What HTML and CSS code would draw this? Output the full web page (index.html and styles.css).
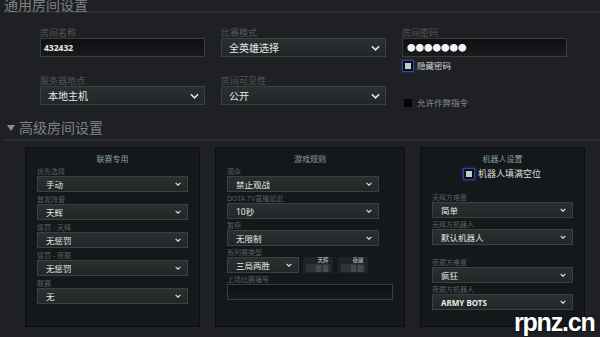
FILE: index.html
```html
<!DOCTYPE html>
<html lang="zh-CN">
<head>
<meta charset="utf-8">
<title>房间设置</title>
<link rel="stylesheet" href="styles.css">
</head>
<body>
<div class="sec-head top"><h2>通用房间设置</h2></div>

<div class="general">
  <div class="fg">
    <div class="lbl">房间名称</div>
    <div class="tinput">432432</div>
  </div>
  <div class="fg">
    <div class="lbl">比赛模式</div>
    <div class="dd big"><span>全英雄选择</span><svg class="chev" viewBox="0 0 10 6"><path d="M1 1L5 5L9 1"/></svg></div>
  </div>
  <div class="fg">
    <div class="lbl">房间密码</div>
    <div class="tinput pw">●●●●●●●</div>
    <div class="check on"><span class="cb"></span><span>隐藏密码</span></div>
  </div>
  <div class="fg">
    <div class="lbl">服务器地点</div>
    <div class="dd big"><span>本地主机</span><svg class="chev" viewBox="0 0 10 6"><path d="M1 1L5 5L9 1"/></svg></div>
  </div>
  <div class="fg">
    <div class="lbl">房间可见性</div>
    <div class="dd big"><span>公开</span><svg class="chev" viewBox="0 0 10 6"><path d="M1 1L5 5L9 1"/></svg></div>
  </div>
  <div class="fg cheat">
    <div class="check"><span class="cb"></span><span>允许作弊指令</span></div>
  </div>
</div>

<div class="sec-head adv"><span class="tri"></span><h2>高级房间设置</h2></div>

<div class="panels">
  <div class="panel p1">
    <div class="ptitle">联赛专用</div>
    <div class="groups g1">
      <div class="pg"><div class="lbl2">优先选择</div><div class="dd sm"><span>手动</span><svg class="chev s" viewBox="0 0 10 6"><path d="M1 1L5 5L9 1"/></svg></div></div>
      <div class="pg"><div class="lbl2">首发阵营</div><div class="dd sm"><span>天辉</span><svg class="chev s" viewBox="0 0 10 6"><path d="M1 1L5 5L9 1"/></svg></div></div>
      <div class="pg"><div class="lbl2">惩罚 - 天辉</div><div class="dd sm"><span>无惩罚</span><svg class="chev s" viewBox="0 0 10 6"><path d="M1 1L5 5L9 1"/></svg></div></div>
      <div class="pg"><div class="lbl2">惩罚 - 夜魇</div><div class="dd sm"><span>无惩罚</span><svg class="chev s" viewBox="0 0 10 6"><path d="M1 1L5 5L9 1"/></svg></div></div>
      <div class="pg"><div class="lbl2">联赛</div><div class="dd sm"><span>无</span><svg class="chev s" viewBox="0 0 10 6"><path d="M1 1L5 5L9 1"/></svg></div></div>
    </div>
  </div>

  <div class="panel p2">
    <div class="ptitle">游戏规则</div>
    <div class="groups g2">
      <div class="pg"><div class="lbl2">观众</div><div class="dd sm w152"><span>禁止观战</span><svg class="chev s" viewBox="0 0 10 6"><path d="M1 1L5 5L9 1"/></svg></div></div>
      <div class="pg"><div class="lbl2">DOTA TV直播延迟</div><div class="dd sm w152"><span>10秒</span><svg class="chev s" viewBox="0 0 10 6"><path d="M1 1L5 5L9 1"/></svg></div></div>
      <div class="pg"><div class="lbl2">暂停</div><div class="dd sm w152"><span>无限制</span><svg class="chev s" viewBox="0 0 10 6"><path d="M1 1L5 5L9 1"/></svg></div></div>
      <div class="pg">
        <div class="lbl2">系列赛类型</div>
        <div class="series">
          <div class="dd sm w72"><span>三局两胜</span><svg class="chev s" viewBox="0 0 10 6"><path d="M1 1L5 5L9 1"/></svg></div>
          <div class="scores">
            <div class="score"><div class="sl">天辉</div><div class="bar"><span class="sq"></span><span class="sq"></span></div></div>
            <div class="score"><div class="sl">夜魇</div><div class="bar"><span class="sq"></span><span class="sq"></span></div></div>
          </div>
        </div>
      </div>
      <div class="pg"><div class="lbl2">上场比赛编号</div><div class="tinput sm"></div></div>
    </div>
  </div>

  <div class="panel p3">
    <div class="ptitle">机器人设置</div>
    <div class="check on center"><span class="cb"></span><span>机器人填满空位</span></div>
    <div class="groups g3">
      <div class="pg"><div class="lbl2">天辉方难度</div><div class="dd sm"><span>简单</span><svg class="chev s" viewBox="0 0 10 6"><path d="M1 1L5 5L9 1"/></svg></div></div>
      <div class="pg"><div class="lbl2">天辉方机器人</div><div class="dd sm"><span>默认机器人</span><svg class="chev s" viewBox="0 0 10 6"><path d="M1 1L5 5L9 1"/></svg></div></div>
      <div class="pg spaced"><div class="lbl2">夜魇方难度</div><div class="dd sm"><span>疯狂</span><svg class="chev s" viewBox="0 0 10 6"><path d="M1 1L5 5L9 1"/></svg></div></div>
      <div class="pg"><div class="lbl2">夜魇方机器人</div><div class="dd sm"><span class="bold">ARMY BOTS</span><svg class="chev s" viewBox="0 0 10 6"><path d="M1 1L5 5L9 1"/></svg></div></div>
    </div>
  </div>
</div>

<div class="wm">rpnz.cn</div>
</body>
</html>
```

FILE: styles.css
```css
* { box-sizing: border-box; }

html, body {
  margin: 0;
  width: 600px;
  height: 337px;
  overflow: hidden;
  background: #1e2023;
}

body {
  position: relative;
  font-family: "Noto Sans", "Noto Sans CJK SC", sans-serif;
  color: #e4e6e6;
}

.sec-head {
  margin-left: 4px;
  border-bottom: 2px solid #2c2f32;
}

.sec-head h2 {
  margin: 0;
  font-weight: normal;
  font-size: 14px;
  line-height: 16px;
  color: #7e8285;
  white-space: nowrap;
}

.top { height: 16px; }
.top h2 { margin-top: -3px; }

.general {
  display: grid;
  grid-template-columns: 165px 165px 165px;
  column-gap: 16px;
  row-gap: 4px;
  align-items: start;
  padding-left: 40px;
  margin-top: 14px;
}

.lbl {
  height: 11px;
  font-size: 9px;
  line-height: 11px;
  color: #53585b;
  white-space: nowrap;
}

.tinput {
  height: 19px;
  border: 1px solid #383c3e;
  background: linear-gradient(#0d0f10, #191b1c);
  color: #ececec;
  font-size: 8.5px;
  font-weight: bold;
  line-height: 17px;
  padding-left: 3px;
}

.tinput.pw {
  font-family: "Noto Sans CJK SC", sans-serif;
  font-weight: normal;
  font-size: 8.5px;
  padding-left: 4px;
  color: #f4f4f4;
}

.tinput.sm { height: 16px; }

.dd {
  display: flex;
  align-items: center;
  justify-content: space-between;
  border: 1px solid #394141;
  background: linear-gradient(#29302f, #212727);
  color: #e6e8e8;
  white-space: nowrap;
}

.dd.big {
  height: 19px;
  padding: 0 5px 0 7px;
  font-size: 10px;
}

.dd.sm {
  height: 16px;
  padding: 0 6px 0 8px;
  font-size: 8.5px;
}

.dd .bold { font-weight: bold; font-size: 8px; }

.chev {
  width: 9px;
  height: 6px;
  flex: none;
}

.chev path {
  fill: none;
  stroke: #e4e6e6;
  stroke-width: 1.7;
}

.chev.s { width: 6px; height: 4px; }
.chev.s path { stroke-width: 2; stroke: #d8dbdb; }

.check {
  display: flex;
  align-items: center;
  gap: 4px;
  height: 10px;
  margin-top: 4px;
  margin-left: 1px;
  font-size: 8.5px;
  line-height: 10px;
  color: #8a8d90;
  white-space: nowrap;
}

.check .cb {
  width: 10px;
  height: 10px;
  flex: none;
  background: #050505;
  border: 1px solid #1c1d1e;
}

.check.on { color: #d4d6d8; }

.check.on .cb {
  border: 2px solid #0c0c14;
  background: #b3d3d1;
  box-shadow: 0 0 0 1px #3d3f96, 0 0 3px 1px #3a3c8c;
}

.cheat { margin-top: 19px; }

.adv {
  display: flex;
  align-items: center;
  gap: 4px;
  margin-top: 12px;
  padding-bottom: 3px;
}

.tri {
  width: 0;
  height: 0;
  margin-left: 3px;
  border-left: 4px solid transparent;
  border-right: 4px solid transparent;
  border-top: 6px solid #8a8e91;
}

.panels {
  display: flex;
  gap: 15px;
  padding-left: 25px;
  margin-top: 6px;
}

.panel {
  height: 180px;
  background: #15181a;
  border: 1px solid #0c0e0f;
  padding: 5px 11px 0 11px;
  display: flex;
  flex-direction: column;
}

.p1 { width: 175px; }
.p2 { width: 190px; }
.p3 { width: 165px; }

.ptitle {
  font-size: 8px;
  line-height: 12px;
  color: #8ea09b;
  text-align: center;
  white-space: nowrap;
}

.groups {
  display: flex;
  flex-direction: column;
  margin-top: 2px;
}

.g1 { gap: 3px; }
.g2 { gap: 2px; }
.g3 { gap: 2px; margin-top: 14px; }
.spaced { margin-top: 11px; }

.lbl2 {
  height: 9px;
  font-size: 7px;
  line-height: 9px;
  color: #5a5f62;
  white-space: nowrap;
}

.w152 { width: 152px; }
.w72 { width: 72px; }

.series {
  display: flex;
  align-items: flex-start;
}

.scores {
  display: flex;
  gap: 5px;
  margin-left: 4px;
}

.score {
  width: 30px;
  height: 16px;
  background: #1f2325;
  display: flex;
  flex-direction: column;
  align-items: center;
}

.sl {
  font-size: 5.5px;
  line-height: 7px;
  color: #d0d2d2;
  padding-left: 10px;
}

.bar {
  width: 24px;
  height: 8px;
  background: #2f3335;
  display: flex;
  gap: 2px;
  justify-content: flex-end;
  align-items: center;
  padding-right: 2px;
}

.sq {
  width: 5px;
  height: 7px;
  background: #45494b;
}

.check.center {
  justify-content: center;
  margin-top: 4px;
  margin-left: 0;
  font-size: 9px;
  color: #dcdede;
}

.wm {
  position: absolute;
  left: 514px;
  top: 310px;
  font-family: "Liberation Sans", Arial, sans-serif;
  font-weight: bold;
  font-size: 25px;
  line-height: 25px;
  letter-spacing: -1.2px;
  color: #ffffff;
  text-shadow: 0 0 2px #000, 1px 1px 1px #222;
  white-space: nowrap;
}
```
